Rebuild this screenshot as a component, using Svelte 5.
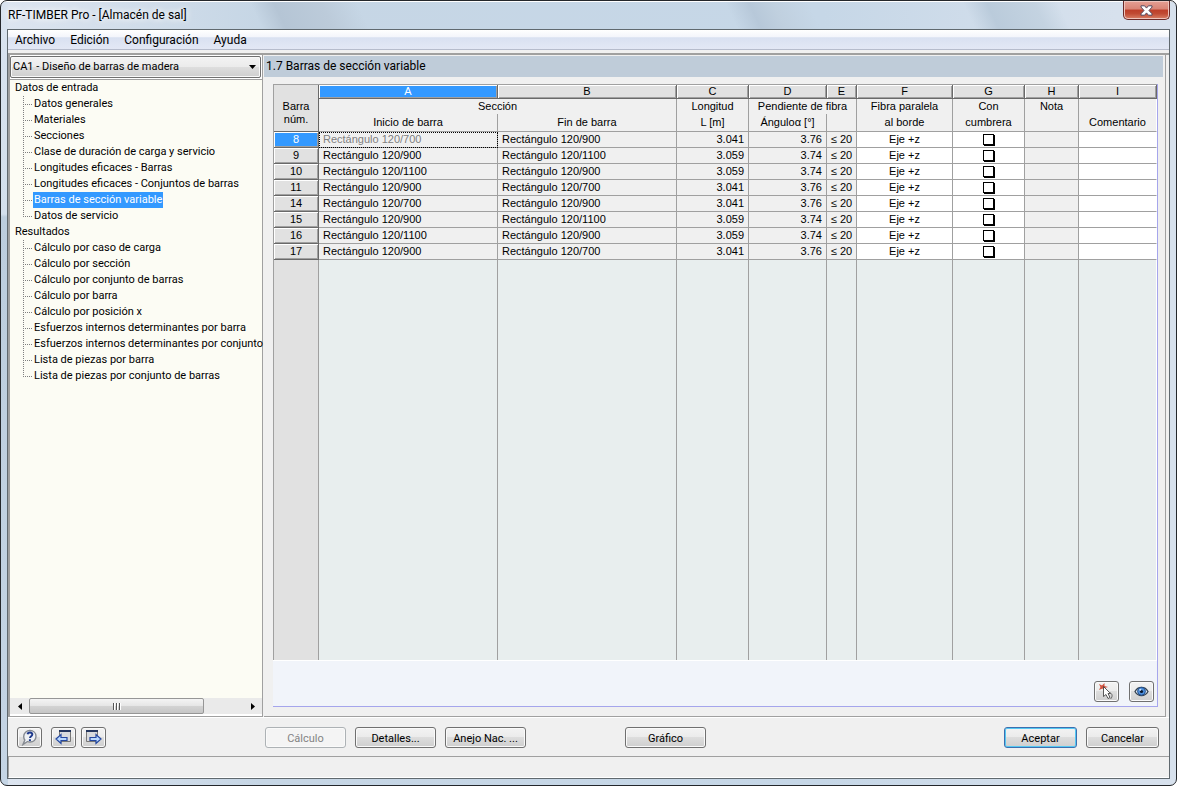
<script>
    const menus = ['Archivo', 'Edición', 'Configuración', 'Ayuda'];
    const letters = ['A', 'B', 'C', 'D', 'E', 'F', 'G', 'H', 'I'];

    const tree = [
        {
            title: 'Datos de entrada',
            items: [
                'Datos generales',
                'Materiales',
                'Secciones',
                'Clase de duración de carga y servicio',
                'Longitudes eficaces - Barras',
                'Longitudes eficaces - Conjuntos de barras',
                'Barras de sección variable',
                'Datos de servicio'
            ]
        },
        {
            title: 'Resultados',
            items: [
                'Cálculo por caso de carga',
                'Cálculo por sección',
                'Cálculo por conjunto de barras',
                'Cálculo por barra',
                'Cálculo por posición x',
                'Esfuerzos internos determinantes por barra',
                'Esfuerzos internos determinantes por conjunto',
                'Lista de piezas por barra',
                'Lista de piezas por conjunto de barras'
            ]
        }
    ];

    let rows = [
        { id: 8, start: '120/700', end: '120/900', length: '3.041', angle: '3.76', ridge: false },
        { id: 9, start: '120/900', end: '120/1100', length: '3.059', angle: '3.74', ridge: false },
        { id: 10, start: '120/1100', end: '120/900', length: '3.059', angle: '3.74', ridge: false },
        { id: 11, start: '120/900', end: '120/700', length: '3.041', angle: '3.76', ridge: false },
        { id: 14, start: '120/700', end: '120/900', length: '3.041', angle: '3.76', ridge: false },
        { id: 15, start: '120/900', end: '120/1100', length: '3.059', angle: '3.74', ridge: false },
        { id: 16, start: '120/1100', end: '120/900', length: '3.059', angle: '3.74', ridge: false },
        { id: 17, start: '120/900', end: '120/700', length: '3.041', angle: '3.76', ridge: false }
    ];

    let selectedItem = 'Barras de sección variable';
    let selectedRow = 8;
</script>

<div class="window">
    <header class="titlebar">
        <span class="title">RF-TIMBER Pro - [Almacén de sal]</span>
        <button class="close" aria-label="Cerrar">
            <svg width="13" height="11" viewBox="0 0 13 11">
                <path d="M1 .8h3.6l1.9 2.3L8.4.8H12v1.3L9 5.5l3 3.3v1.4H8.4L6.5 7.9l-1.9 2.3H1V8.800l3-3.300-3-3.400z" fill="#fff" stroke="#53465c" />
            </svg>
        </button>
    </header>

    <div class="client">
        <nav class="menubar">
            {#each menus as menu}
                <button>{menu}</button>
            {/each}
        </nav>

        <div class="panes">
            <aside class="sidebar">
                <div class="case">
                    <select aria-label="Caso">
                        <option>CA1 - Diseño de barras de madera</option>
                    </select>
                    <svg width="7" height="4" viewBox="0 0 7 4"><path d="M0 0h7L3.500 4z" /></svg>
                </div>
                <div class="tree">
                    {#each tree as group}
                        <p>{group.title}</p>
                        <ul>
                            {#each group.items as item}
                                <li>
                                    <a href="#tree" class:selected={item === selectedItem} on:click|preventDefault={() => selectedItem = item}>{item}</a>
                                </li>
                            {/each}
                        </ul>
                    {/each}
                </div>
                <div class="scrollbar">
                    <button class="arrow" aria-label="Izquierda">
                        <svg width="4" height="7" viewBox="0 0 4 7"><path d="M4 0v7L0 3.500z" /></svg>
                    </button>
                    <div class="track">
                        <div class="thumb"><i></i><i></i><i></i></div>
                    </div>
                    <button class="arrow" aria-label="Derecha">
                        <svg width="4" height="7" viewBox="0 0 4 7"><path d="M0 0v7l4-3.500z" /></svg>
                    </button>
                </div>
            </aside>

            <main>
                <h1>1.7 Barras de sección variable</h1>
                <section class="sheet">
                    <div class="grid">
                        <table>
                            <colgroup>
                                <col class="w-num" />
                                <col class="w-section" />
                                <col class="w-section" />
                                <col class="w-length" />
                                <col class="w-angle" />
                                <col class="w-limit" />
                                <col class="w-fibre" />
                                <col class="w-ridge" />
                                <col class="w-note" />
                                <col />
                            </colgroup>
                            <thead>
                                <tr class="letters">
                                    <th rowspan="3" class="corner">Barra<br />núm.</th>
                                    {#each letters as letter, i}
                                        <th class:selected={i === 0}>{letter}</th>
                                    {/each}
                                </tr>
                                <tr class="upper">
                                    <th colspan="2">Sección</th>
                                    <th>Longitud</th>
                                    <th colspan="2">Pendiente de fibra</th>
                                    <th>Fibra paralela</th>
                                    <th>Con</th>
                                    <th>Nota</th>
                                    <th></th>
                                </tr>
                                <tr class="lower">
                                    <th>Inicio de barra</th>
                                    <th>Fin de barra</th>
                                    <th>L [m]</th>
                                    <th>Ánguloα [°]</th>
                                    <th></th>
                                    <th>al borde</th>
                                    <th>cumbrera</th>
                                    <th></th>
                                    <th>Comentario</th>
                                </tr>
                            </thead>
                            <tbody>
                                {#each rows as row}
                                    <tr>
                                        <th class:selected={row.id === selectedRow}>{row.id}</th>
                                        <td class:focused={row.id === selectedRow}>Rectángulo {row.start}</td>
                                        <td>Rectángulo {row.end}</td>
                                        <td class="number">{row.length}</td>
                                        <td class="number">{row.angle}</td>
                                        <td class="center">≤ 20</td>
                                        <td class="center editable">Eje +z</td>
                                        <td class="center editable">
                                            <input type="checkbox" aria-label="Con cumbrera {row.id}" bind:checked={row.ridge} />
                                        </td>
                                        <td></td>
                                        <td class="editable"></td>
                                    </tr>
                                {/each}
                                <tr class="filler">
                                    <th></th>
                                    {#each letters as _}
                                        <td></td>
                                    {/each}
                                </tr>
                            </tbody>
                        </table>
                    </div>
                    <div class="tools">
                        <button class="button icon" aria-label="Seleccionar barra">
                            <svg width="17" height="17" viewBox="0 0 17 17">
                                <path d="M1 1l3 1.500L6.500 0v3L10 4 6.500 5 7 8 4.500 5.500 1 7l1.500-3z" fill="#d2523f" />
                                <path d="M5.500 3.500l7 7h-2.500l2 4-2 1-2-4-2.500 2z" fill="#fff" stroke="#333" stroke-width=".8" />
                                <path d="M11.500 9.500c3 1 3.500 4 1 6.500" fill="none" stroke="#666" />
                            </svg>
                        </button>
                        <button class="button icon" aria-label="Vista">
                            <svg width="15" height="13" viewBox="0 0 15 13">
                                <path d="M1 6.500C4 1 11 1 14 6.500 11 12 4 12 1 6.500z" fill="#dfe9f4" stroke="#36424f" stroke-width="1.300" />
                                <circle cx="7.500" cy="6.300" r="3.900" fill="#4d8fdc" stroke="#234f8c" />
                                <circle cx="7.500" cy="6.500" r="1.600" fill="#07152b" />
                                <circle cx="6.300" cy="4.800" r="1" fill="#cfe6ff" />
                            </svg>
                        </button>
                    </div>
                </section>
            </main>
        </div>

        <footer class="actions">
            <div class="icons">
                <button class="button icon help" aria-label="Ayuda">
                    <svg width="17" height="17" viewBox="0 0 17 17">
                        <path d="M9 1.500c3.500 0 6 2.500 6 5.800S12.500 13 9 13c-1 0-1.800-.1-2.500-.5L2 15.500 3.800 11C3 10 2.700 8.800 2.700 7.500 2.700 4 5.500 1.500 9 1.500z" fill="#eef1f5" stroke="#858a91" stroke-width="1.400" />
                        <path d="M6.500 5.300C7 3 11.500 3 11.300 5.500 11.200 7.200 9 7.200 9 9M8.900 10.200v1.800" fill="none" stroke="#1f3a8c" stroke-width="2" />
                    </svg>
                </button>
                <button class="button icon" aria-label="Anterior">
                    <svg width="17" height="17" viewBox="0 0 17 17">
                        <path d="M4.500 1.500h11v11h-11z" fill="#d8dadd" stroke="#777" />
                        <path d="M4 2h12" stroke="#24365e" stroke-width="2" />
                        <path d="M1 10l5-4.500v3h6v3H6v3z" fill="#b9d8ff" stroke="#24479f" stroke-width="1.200" />
                    </svg>
                </button>
                <button class="button icon" aria-label="Siguiente">
                    <svg width="17" height="17" viewBox="0 0 17 17">
                        <path d="M1.500 1.500h11v11h-11z" fill="#d8dadd" stroke="#777" />
                        <path d="M1 2h12" stroke="#24365e" stroke-width="2" />
                        <path d="M16 10l-5-4.500v3H5v3h6v3z" fill="#b9d8ff" stroke="#24479f" stroke-width="1.200" />
                    </svg>
                </button>
            </div>
            <div class="group">
                <button class="button wide" disabled>Cálculo</button>
                <button class="button wide">Detalles...</button>
                <button class="button wide">Anejo Nac. ...</button>
            </div>
            <button class="button wide graphic">Gráfico</button>
            <div class="group confirm">
                <button class="button default">Aceptar</button>
                <button class="button">Cancelar</button>
            </div>
        </footer>
        <div class="status"></div>
    </div>
</div>

<style>
    :global(body) {
        background: #fff;
    }

    .window {
        display: flex;
        flex-flow: column;
        box-sizing: border-box;
        height: 100vh;
        padding: 0 6px 6px;
        border: 1px solid #24272b;
        border-radius: 7px;
        background:
            linear-gradient(#fff, #fff) 0 0 / 100% 1px no-repeat,
            linear-gradient(65deg, transparent 22%, #b5c5d5 24%, #bccbda 28%, transparent 31%, transparent 62%, #b7c8d9 64%, #c0d0df 66%, transparent 69%, transparent 82%, #bacbdb 84%, #c4d3e1 88%, transparent 90%) 0 0 / 100% 28px no-repeat,
            linear-gradient(#d9e3ef 0, #d3dfec 213px, #bccddd 216px, #c5d5e5 100%) 0 0 / 7px 100% no-repeat,
            linear-gradient(90deg, #dde5f0, #c6d6e5 22%, #c6d7e7 70%, #d7e1ed 95%);
        font: 11px/16px Roboto, sans-serif;
        color: #000;
    }

    button,
    select {
        padding: 0;
        border: 0;
        background: none;
        font: inherit;
        color: inherit;
    }

    .titlebar {
        display: flex;
        justify-content: space-between;
        height: 28px;
        font-size: 12px;
    }

    .title {
        padding: 6px 1px;
        text-shadow: 0 0 6px #fff, 0 0 8px #fff;
    }

    .close {
        display: flex;
        align-items: center;
        justify-content: center;
        box-sizing: border-box;
        width: 47px;
        height: 19px;
        border: 1px solid #6b2a28;
        border-top: 0;
        border-radius: 0 0 5px 5px;
        background: linear-gradient(#e5a094, #d98475 45%, #bd3e29 50%, #c04a33 70%, #d98067);
        box-shadow: inset 0 0 0 1px #eec4bc;
    }

    .client {
        display: flex;
        flex: 1;
        flex-flow: column;
        min-height: 0;
        border: 1px solid #60696f;
        background: #f0f0f0;
    }

    .menubar {
        display: flex;
        gap: 15px;
        height: 19px;
        padding-left: 7px;
        border-bottom: 1px solid #b6bccc;
        background: linear-gradient(#fff, #f3f5fb 38%, #d9e1f1 40%, #e3e8f5);
        font-size: 12px;
    }

    .panes {
        display: flex;
        flex: 1;
        gap: 1px;
        min-height: 0;
        padding-right: 3px;
        margin-top: 3px;
        border-top: 2px solid #a0a09f;
        border-bottom: 1px solid #fff;
    }

    .sidebar {
        display: flex;
        flex-flow: column;
        box-sizing: border-box;
        width: 255px;
        padding: 1px 0 2px;
        border: solid #a0a0a0;
        border-width: 0 1px 1px 2px;
        background: #fff;
    }

    .case {
        position: relative;
        margin: 0 1px 1px 0;
    }

    .case select {
        appearance: none;
        display: block;
        width: 100%;
        height: 22px;
        padding: 0 20px 0 2px;
        border: 1px solid #707070;
        border-radius: 2px;
        background: linear-gradient(#f3f3f3, #ebebeb 50%, #dddddd 52%, #cfcfcf);
        box-shadow: inset 0 0 0 1px #f8f8f8;
    }

    .case svg {
        position: absolute;
        top: 9px;
        right: 5px;
    }

    .tree {
        flex: 1;
        border-top: 1px solid #a0a0a0;
        background: #fcfcf4;
        white-space: nowrap;
    }

    .tree p {
        margin: 0;
        padding-left: 5px;
    }

    .tree ul {
        margin: 0;
        padding: 0 0 0 13px;
        list-style: none;
    }

    .tree li {
        display: flex;
        height: 16px;
        padding-left: 10px;
        background:
            repeating-linear-gradient(90deg, #808080 0 1px, transparent 1px 2px) 0 8px / 10px 1px no-repeat,
            repeating-linear-gradient(#808080 0 1px, transparent 1px 2px) 0 0 / 1px 100% no-repeat;
    }

    .tree li:last-child {
        background-size: 10px 1px, 1px 50%;
    }

    .tree a {
        padding: 0 1px;
        color: inherit;
        text-decoration: none;
    }

    .tree a.selected {
        background: #3399ff;
        color: #fff;
    }

    .scrollbar {
        display: flex;
        height: 16px;
        background: #eaeaea;
    }

    .arrow {
        display: flex;
        align-items: center;
        justify-content: center;
        width: 19px;
    }

    .track {
        flex: 1;
        display: flex;
    }

    .thumb {
        display: flex;
        align-items: center;
        justify-content: center;
        gap: 1px;
        box-sizing: border-box;
        width: 82%;
        border: 1px solid #969696;
        border-radius: 2px;
        background: linear-gradient(#f4f4f4, #e6e6e6 48%, #d3d3d3 52%, #c6c6c6);
    }

    .thumb i {
        width: 2px;
        height: 7px;
        background: linear-gradient(90deg, #555 1px, #fff 1px);
    }

    main {
        display: flex;
        flex: 1;
        flex-flow: column;
        min-width: 0;
        padding: 1px 2px 9px 0;
        border: solid #a0a0a0;
        border-width: 0 1px 1px 0;
    }

    h1 {
        margin: 0 0 7px;
        padding: 0 2px;
        background: #bfccd9;
        font-size: 12px;
        font-weight: 400;
        line-height: 21px;
    }

    .sheet {
        display: flex;
        flex: 1;
        flex-flow: column;
        margin: 0 5px 0 9px;
        border-right: 1px solid #a5a5ec;
        border-bottom: 1px solid #a5a5ec;
        background: #f1f4fa;
    }

    .grid {
        flex: 1;
        font-family: "Liberation Sans", sans-serif;
        line-height: 15px;
    }

    .tools {
        display: flex;
        justify-content: flex-end;
        gap: 10px;
        padding: 20px 3px 4px;
        border-top: 1px solid #fff;
    }

    table {
        width: 100%;
        height: 100%;
        border: solid #a0a0a0;
        border-width: 1px 0 0 1px;
        border-spacing: 0;
        table-layout: fixed;
    }

    .w-num { width: 45px; }
    .w-section { width: 179px; }
    .w-length { width: 72px; }
    .w-angle { width: 78px; }
    .w-limit { width: 30px; }
    .w-fibre { width: 96px; }
    .w-ridge { width: 72px; }
    .w-note { width: 54px; }

    th,
    td {
        height: 15px;
        padding: 0;
        border: solid #a0a0a0;
        border-width: 0 1px 1px 0;
        background: #f0f0f0;
        font-weight: 400;
        overflow: hidden;
        white-space: nowrap;
    }

    td {
        padding: 0 4px;
    }

    tr > :last-child {
        border-right-color: #fff;
    }

    .letters th {
        height: 13px;
        border-color: #696969;
        background: #e1e1e1;
        box-shadow: inset 1px 1px #fff, inset -1px -1px #a0a0a0;
        line-height: 13px;
    }

    .letters .corner {
        border-color: #a0a0a0 #696969 #696969 #a0a0a0;
        box-shadow: none;
        padding-top: 10px;
    }

    .upper th {
        border-bottom: 0;
    }

    .lower th {
        height: 17px;
    }

    tbody th {
        border-color: #696969;
        background: #e1e1e1;
        box-shadow: inset 1px 1px #fff, inset -1px -1px #a0a0a0;
    }

    th.selected,
    .letters th.selected {
        background: #3399ff;
        color: #fff;
    }

    .focused {
        outline: 1px dotted #000;
        outline-offset: -1px;
        color: #808080;
    }

    .number {
        text-align: right;
    }

    .center {
        padding: 0;
        text-align: center;
    }

    .editable {
        background: #fff;
    }

    .filler th {
        height: auto;
        border-bottom: 0;
        border-color: #a0a0a0;
        box-shadow: none;
    }

    .filler td {
        height: auto;
        border-bottom: 0;
        background: #e8eeee;
    }

    input[type='checkbox'] {
        appearance: none;
        display: block;
        width: 11px;
        height: 11px;
        margin: 0 auto;
        border: 1px solid #000;
        background: #fff;
        box-shadow: 1px 1px #000;
    }

    input[type='checkbox']:checked {
        background: #000;
    }

    .actions {
        display: flex;
        align-items: center;
        height: 37px;
        padding: 1px 10px 0 9px;
        border-bottom: 1px solid #a0a0a0;
    }

    .icons {
        display: flex;
        gap: 5px;
        width: 248px;
    }

    .help {
        margin-right: 4px;
    }

    .group {
        display: flex;
        gap: 9px;
    }

    .graphic {
        margin-left: 99px;
    }

    .confirm {
        margin-left: auto;
    }

    .button {
        display: flex;
        align-items: center;
        justify-content: center;
        box-sizing: border-box;
        width: 73px;
        height: 21px;
        padding-top: 2px;
        border: 1px solid #707070;
        border-radius: 3px;
        background: linear-gradient(#f3f3f3, #ebebeb 48%, #dddddd 50%, #cfcfcf);
        box-shadow: inset 0 0 0 1px #fafafa;
    }

    .button.wide {
        width: 81px;
    }

    .button.icon {
        width: 25px;
        padding-top: 0;
    }

    .button.default {
        border-color: #3c6fb0;
        box-shadow: inset 0 0 0 1px #55c8f2;
    }

    .button:disabled {
        border-color: #adb2b5;
        background: #f4f4f4;
        color: #838383;
    }

    .status {
        height: 20px;
        border-bottom: 1px solid #fff;
        border-left: 1px solid #a0a0a0;
    }
</style>
